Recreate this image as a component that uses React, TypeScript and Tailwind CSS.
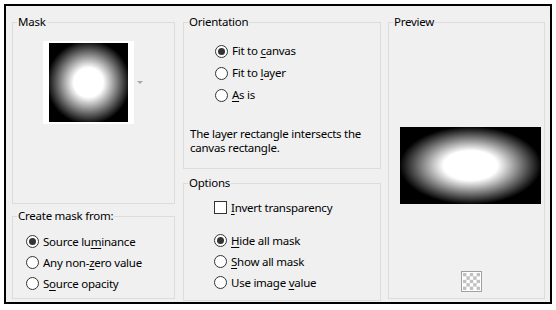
import React from 'react';

const font = { fontFamily: '"Noto Sans", "Open Sans", sans-serif' };

const Radio = ({ checked }: { checked?: boolean }) => (
  <span className="w-[13px] h-[13px] rounded-full border border-[#333] bg-white flex items-center justify-center shrink-0">
    {checked && <span className="w-[7px] h-[7px] rounded-full bg-[#333]" />}
  </span>
);

const Option = ({
  checked,
  pre,
  u,
  post,
}: {
  checked?: boolean;
  pre: string;
  u: string;
  post: string;
}) => (
  <div className="flex items-center gap-[4px] h-[21px]">
    <Radio checked={checked} />
    <span className="whitespace-pre">
      {pre}
      <span className="underline underline-offset-2">{u}</span>
      {post}
    </span>
  </div>
);

const Group = ({
  title,
  className,
  children,
}: {
  title: string;
  className: string;
  children?: React.ReactNode;
}) => (
  <fieldset className={`border border-[#dcdcdc] ${className}`}>
    <legend className="ml-[4px] px-[1px] leading-[16px]">{title}</legend>
    {children}
  </fieldset>
);

const Checker = () => (
  <svg width="21" height="21" viewBox="0 0 21 21">
    <rect x="0.5" y="0.5" width="20" height="20" fill="#fff" stroke="#a0a0a0" />
    {[0, 1, 2, 3, 4].map((r) =>
      [0, 1, 2, 3, 4].map((c) =>
        (r + c) % 2 === 0 ? (
          <rect key={`${r}-${c}`} x={2 + c * 3.4} y={2 + r * 3.4} width="3.4" height="3.4" fill="#c0c0c0" />
        ) : null
      )
    )}
  </svg>
);

export default function App() {
  return (
    <div
      className="w-[556px] h-[310px] bg-white pt-[4px] pl-[4px] text-[11.5px] tracking-[-0.25px] text-black"
      style={font}
    >
      <div className="w-[548px] h-[300px] border-2 border-black bg-[#f0f0f0] pt-[8px] pl-[6px] flex gap-[7px]">
        {/* left column */}
        <div className="flex flex-col gap-[4px] w-[163px]">
          <Group title="Mask" className="h-[190px]">
            <div className="flex items-center pl-[30px] mt-[11px]">
              <div className="bg-white px-[6px] py-[2px]">
                <div className="w-[79px] h-[79px] bg-[radial-gradient(circle_42px_at_center,#fff_35%,#000_100%)]" />
              </div>
              <span className="ml-[3px] w-0 h-0 border-l-[3px] border-r-[3px] border-t-[3px] border-l-transparent border-r-transparent border-t-[#a8a8a8]" />
            </div>
          </Group>
          <Group title="Create mask from:" className="h-[91px]">
            <div className="pl-[13px] mt-[7px] flex flex-col">
              <Option checked pre="Source lu" u="m" post="inance" />
              <Option pre="Any non-" u="z" post="ero value" />
              <Option pre="S" u="o" post="urce opacity" />
            </div>
          </Group>
        </div>

        {/* middle column */}
        <div className="flex flex-col gap-[6px] w-[198px] ml-[1px]">
          <Group title="Orientation" className="h-[155px]">
            <div className="pl-[31px] mt-[10px] flex flex-col">
              <div className="h-[22px] flex items-center">
                <Option checked pre="Fit to " u="c" post="anvas" />
              </div>
              <div className="h-[22px] flex items-center">
                <Option pre="Fit to " u="l" post="ayer" />
              </div>
              <div className="h-[22px] flex items-center">
                <Option pre="" u="A" post="s is" />
              </div>
            </div>
            <p className="pl-[6px] mt-[21px] leading-[14px]">
              The layer rectangle intersects the
              <br />
              canvas rectangle.
            </p>
          </Group>
          <Group title="Options" className="h-[126px]">
            <div className="pl-[30px] mt-[6px] flex flex-col">
              <div className="flex items-center gap-[4px] h-[21px]">
                <span className="w-[13px] h-[13px] border border-[#333] bg-white shrink-0" />
                <span>
                  <span className="underline underline-offset-2">I</span>nvert transparency
                </span>
              </div>
              <div className="h-[12px]" />
              <Option checked pre="" u="H" post="ide all mask" />
              <Option pre="" u="S" post="how all mask" />
              <Option pre="Use image " u="v" post="alue" />
            </div>
          </Group>
        </div>

        {/* right column */}
        <Group title="Preview" className="w-[157px] h-[285px]">
          <div className="pl-[11px] mt-[97px]">
            <div className="w-[141px] h-[77px] bg-[radial-gradient(71px_39px_at_center,#fff_38%,#000_100%)]" />
          </div>
          <div className="flex justify-center pl-[9px] mt-[67px]">
            <Checker />
          </div>
        </Group>
      </div>
    </div>
  );
}
